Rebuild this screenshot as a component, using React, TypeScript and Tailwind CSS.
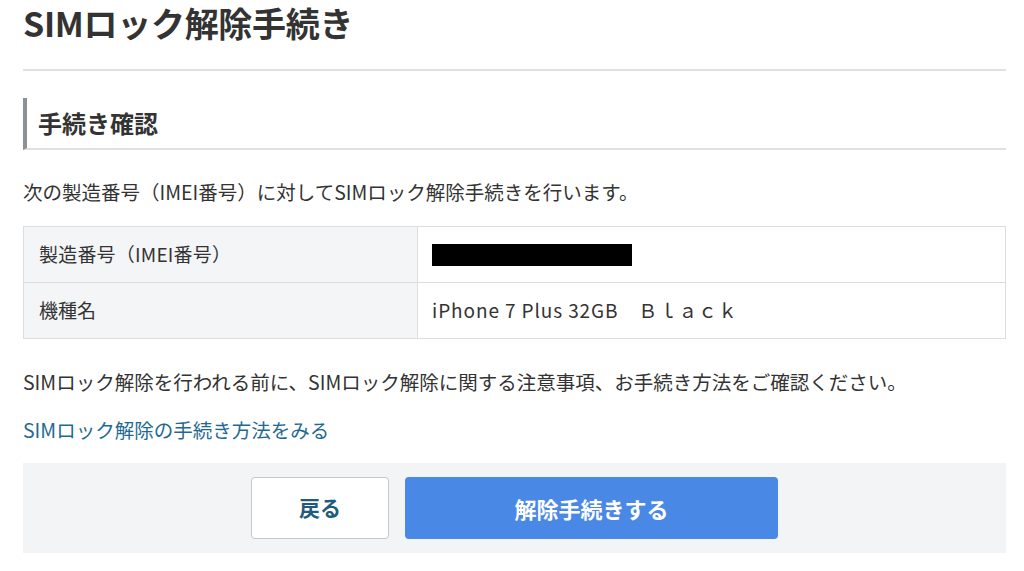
export default function App() {
  return (
    <div className="min-h-[571px] bg-white pl-[23px] pr-[18px] text-[#333] font-['Noto_Sans_CJK_JP','Noto_Sans',sans-serif]">
      {/* Page title */}
      <h1 className="text-[34px] font-bold leading-[46px] tracking-[-0.3px] text-[#333]">SIMロック解除手続き</h1>
      <div className="mt-[23px] h-[2px] bg-[#e0e0e0]" />

      {/* Section heading */}
      <h2 className="mt-[27px] flex h-[52px] items-center border-b-2 border-l-4 border-b-[#e0e0e0] border-l-[#8c9196] pl-[11px] text-[24px] font-bold text-[#333]">
        手続き確認
      </h2>

      <p className="mt-[24px] text-[19.5px] leading-[36px]">次の製造番号（IMEI番号）に対してSIMロック解除手続きを行います。</p>

      {/* Device table */}
      <table className="mt-[16px] w-full border-collapse border border-[#ddd] text-[19px]">
        <tbody>
          <tr className="h-[56px]">
            <th className="w-[394px] border border-[#ddd] bg-[#f4f5f7] pl-[15px] text-left font-normal tracking-[0.2px]">製造番号（IMEI番号）</th>
            <td className="border border-[#ddd] pl-[14px]">
              <div className="h-[22px] w-[200px] bg-black" />
            </td>
          </tr>
          <tr className="h-[56px]">
            <th className="border border-[#ddd] bg-[#f4f5f7] pl-[15px] text-left font-normal">機種名</th>
            <td className="border border-[#ddd] pl-[14px] tracking-[0.9px]">iPhone 7 Plus 32GB　Ｂｌａｃｋ</td>
          </tr>
        </tbody>
      </table>

      <p className="mt-[25px] text-[19.5px] leading-[36px]">
        SIMロック解除を行われる前に、SIMロック解除に関する注意事項、お手続き方法をご確認ください。
      </p>

      <a href="#" className="mt-[12px] block text-[19.5px] leading-[36px] text-[#1f6a92]">
        SIMロック解除の手続き方法をみる
      </a>

      {/* Actions */}
      <div className="mt-[15px] flex h-[90px] items-center justify-center gap-[16px] bg-[#f3f4f6]">
        <button className="h-[62px] w-[138px] rounded-[4px] border border-[#c4c7cb] bg-white text-[21px] font-bold text-[#1f5c7c]">
          戻る
        </button>
        <button className="h-[62px] w-[373px] rounded-[4px] bg-[#4a88e6] text-[22px] font-bold text-white">
          解除手続きする
        </button>
      </div>
    </div>
  );
}
